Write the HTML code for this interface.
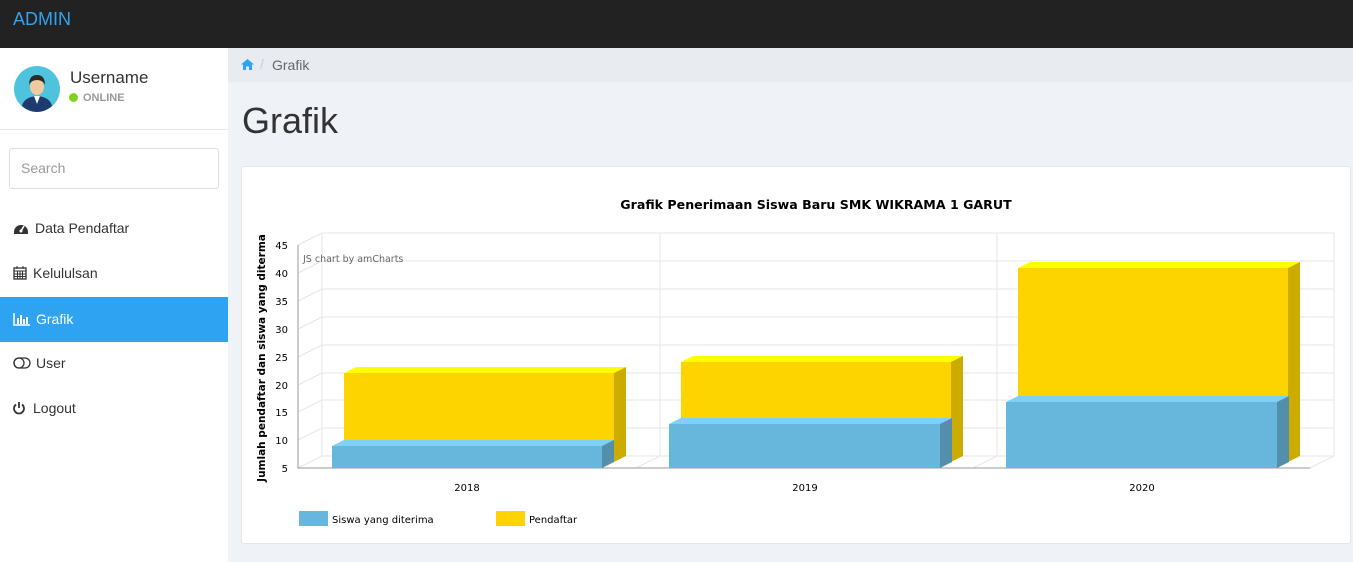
<!DOCTYPE html>
<html><head><meta charset="utf-8"><style>
*{margin:0;padding:0;box-sizing:border-box}
body{width:1353px;height:562px;overflow:hidden;font-family:"Liberation Sans",sans-serif;background:#eff3f7;position:relative}
.top{position:absolute;left:0;top:0;width:1353px;height:48px;background:#222}
.top span{position:absolute;left:13px;top:9px;color:#2ea3f2;font-size:18px}
.side{position:absolute;left:0;top:48px;width:228px;height:514px;background:#fff}
.crumb{position:absolute;left:228px;top:48px;width:1125px;height:34px;background:#e8ecf1;font-size:14px;color:#666}
h1{position:absolute;left:242px;top:100px;font-size:36px;font-weight:normal;color:#333}
.card{position:absolute;left:241px;top:166px;width:1110px;height:378px;background:#fff;border:1px solid #e3e6ea;border-radius:3px}
.menu{position:absolute;left:0;width:228px;height:45px;font-size:14px;color:#333;line-height:45px}
.menu svg{position:absolute;left:13px;top:15px}
.menu span{position:absolute;top:0}
</style></head><body>
<div class="top"><span>ADMIN</span></div>
<div class="side">
 <svg style="position:absolute;left:14px;top:18px" width="46" height="46" viewBox="0 0 46 46">
  <circle cx="23" cy="23" r="23" fill="#4ec3dd"/>
  <path d="M8 40 Q10 31 23 30 Q36 31 38 40 Q31 46 23 46 Q15 46 8 40Z" fill="#1e3a6e"/>
  <path d="M20 30 L23 38 L26 30Z" fill="#fff"/>
  <ellipse cx="23" cy="21" rx="7" ry="8" fill="#f3c9a0"/>
  <path d="M15 19 Q15 9 23 9 Q31 9 31 19 Q29 14 23 14 Q17 14 15 19Z" fill="#2a2a2a"/>
 </svg>
 <div style="position:absolute;left:70px;top:20px;font-size:17px;color:#333">Username</div>
 <div style="position:absolute;left:69px;top:45px;width:9px;height:9px;border-radius:50%;background:#7ed321"></div>
 <div style="position:absolute;left:83px;top:44px;font-size:11px;font-weight:bold;color:#999">ONLINE</div>
 <div style="position:absolute;left:0;top:81px;width:228px;height:1px;background:#e8e8e8"></div>
 <div style="position:absolute;left:9px;top:100px;width:210px;height:41px;border:1px solid #ddd;border-radius:3px;font-size:14px;color:#999;padding:11px 11px">Search</div>
 <div class="menu" style="top:158px"><svg width="16" height="14" viewBox="0 0 16 14"><path d="M1 11A7 7 0 0 1 15 11V13H1Z" fill="#333"/><circle cx="8" cy="10" r="1.5" fill="#fff"/><path d="M8 10L11 5" stroke="#fff" stroke-width="1.5"/></svg><span style="left:35px">Data Pendaftar</span></div>
 <div class="menu" style="top:203px"><svg width="14" height="14" viewBox="0 0 14 14"><rect x="1" y="2" width="12" height="11" fill="none" stroke="#333" stroke-width="1.3"/><path d="M1 5H13M1 8H13M1 10.5H13M4.5 5V13M7 5V13M9.5 5V13M4 0V3M10 0V3" stroke="#333"/></svg><span style="left:33px">Kelululsan</span></div>
 <div class="menu" style="top:249px;background:#2ea3f2;color:#fff"><svg width="18" height="14" viewBox="0 0 18 14"><path d="M1 1V13H17" stroke="#fff" stroke-width="1.5" fill="none"/><path d="M4 6h2v6H4zM7 3h2v9H7zM10 7h2v5h-2zM13 5h2v7h-2z" fill="#fff"/></svg><span style="left:36px">Grafik</span></div>
 <div class="menu" style="top:293px"><svg width="18" height="14" viewBox="0 0 18 14"><rect x="1" y="2" width="16" height="10" rx="5" fill="none" stroke="#333" stroke-width="1.3"/><circle cx="6" cy="7" r="5" fill="none" stroke="#333" stroke-width="1.3"/></svg><span style="left:36px">User</span></div>
 <div class="menu" style="top:338px"><svg width="12" height="14" viewBox="0 0 12 14"><path d="M3 3.5A5 5 0 1 0 9 3.5" stroke="#333" stroke-width="1.8" fill="none"/><path d="M6 1V7" stroke="#333" stroke-width="1.8"/></svg><span style="left:33px">Logout</span></div>
</div>
<div class="crumb"><svg style="position:absolute;left:13px;top:11px" width="13" height="11" viewBox="0 0 13 11"><path d="M6.5 0L0 5.5H2V11H5V7.5H8V11H11V5.5H13Z" fill="#2ea3f2"/></svg><span style="position:absolute;left:32px;top:8px;color:#ccc">/</span><span style="position:absolute;left:44px;top:9px">Grafik</span></div>
<h1>Grafik</h1>
<div class="card"></div>
<svg style="position:absolute;left:0;top:0" width="1353" height="562" font-family="Verdana,'DejaVu Sans',sans-serif">
 <text x="816" y="209" text-anchor="middle" font-size="12.6" font-weight="bold">Grafik Penerimaan Siswa Baru SMK WIKRAMA 1 GARUT</text>
 <g stroke="#e6e6e6" fill="none">
  <path d="M322 233V456M660 233V456M997 233V456M1334 233V456"/>
  <path d="M322 233H1334M322 261H1334M322 289H1334M322 317H1334M322 345H1334M322 373H1334M322 400H1334M322 428H1334M322 456H1334"/>
  <path d="M298 245L322 233M298 273L322 261M298 301L322 289M298 329L322 317M298 357L322 345M298 385L322 373M298 412L322 400M298 440L322 428M298 468L322 456M636 468L660 456M973 468L997 456M1310 468L1334 456"/>
 </g>
 <path d="M298 245V468H1310" stroke="#999" fill="none"/>
 <g font-size="10" text-anchor="end" fill="#000">
  <text x="288" y="249">45</text><text x="288" y="277">40</text><text x="288" y="305">35</text><text x="288" y="333">30</text><text x="288" y="361">25</text><text x="288" y="389">20</text><text x="288" y="416">15</text><text x="288" y="444">10</text><text x="288" y="472">5</text>
 </g>
 <text x="303" y="262" font-size="9.5" fill="#666">JS chart by amCharts</text>
 <text transform="translate(265 358) rotate(-90)" text-anchor="middle" font-size="10.5" font-weight="bold">Jumlah pendaftar dan siswa yang diterma</text>
 <g font-size="10" text-anchor="middle"><text x="467" y="491">2018</text><text x="805" y="491">2019</text><text x="1142" y="491">2020</text></g>
 <rect x="344" y="373" width="270" height="89" fill="#fdd400"/><path d="M344 373L356 367H626L614 373Z" fill="#ffff00"/><path d="M614 373L626 367V456L614 462Z" fill="#cdac00"/>
 <rect x="332" y="446" width="270" height="22" fill="#67b7dc"/><path d="M332 446L344 440H614L602 446Z" fill="#7ed0f5"/><path d="M602 446L614 440V462L602 468Z" fill="#538fad"/>
 <rect x="681" y="362" width="270" height="100" fill="#fdd400"/><path d="M681 362L693 356H963L951 362Z" fill="#ffff00"/><path d="M951 362L963 356V456L951 462Z" fill="#cdac00"/>
 <rect x="669" y="424" width="271" height="44" fill="#67b7dc"/><path d="M669 424L681 418H952L940 424Z" fill="#7ed0f5"/><path d="M940 424L952 418V462L940 468Z" fill="#538fad"/>
 <rect x="1018" y="268" width="270" height="194" fill="#fdd400"/><path d="M1018 268L1030 262H1300L1288 268Z" fill="#ffff00"/><path d="M1288 268L1300 262V456L1288 462Z" fill="#cdac00"/>
 <rect x="1006" y="402" width="271" height="66" fill="#67b7dc"/><path d="M1006 402L1018 396H1289L1277 402Z" fill="#7ed0f5"/><path d="M1277 402L1289 396V462L1277 468Z" fill="#538fad"/>
 <rect x="299" y="511" width="29" height="15" fill="#67b7dc"/><text x="332" y="523" font-size="10">Siswa yang diterima</text>
 <rect x="496" y="511" width="29" height="15" fill="#fdd400"/><text x="529" y="523" font-size="10">Pendaftar</text>
</svg>
</body></html>
